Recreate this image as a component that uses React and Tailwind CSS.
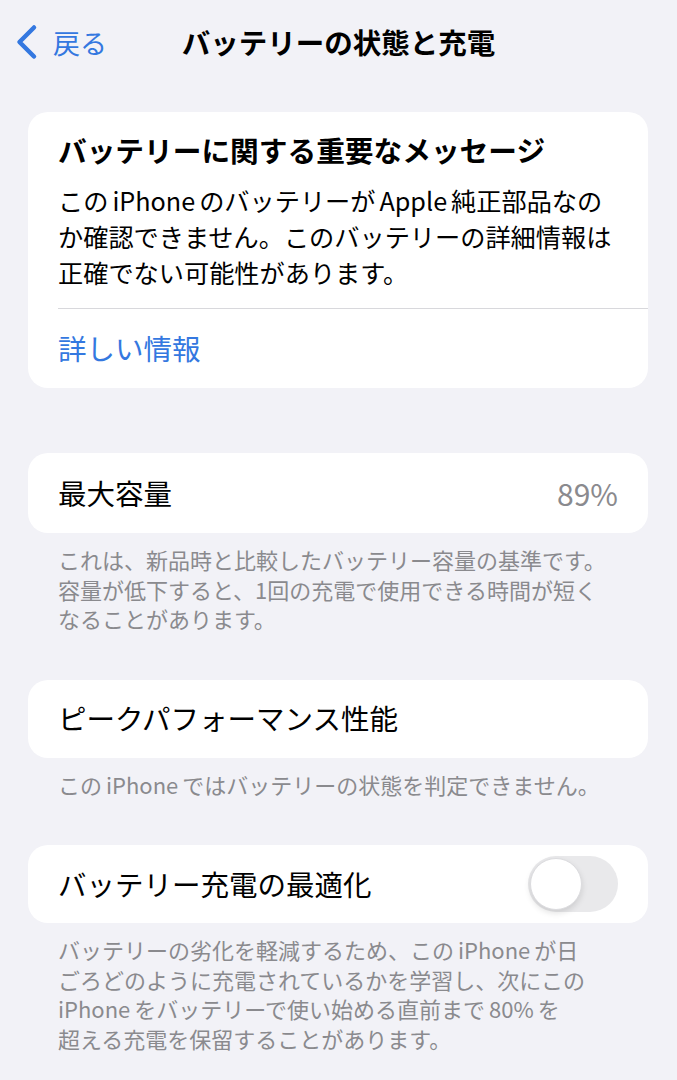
import { useState } from 'react';

const font = { fontFamily: '"Noto Sans CJK JP", "Noto Sans", sans-serif' };

// latin words get a little air around them, like iOS does in Japanese text
const L = ({ children }) => <span className="mx-[4px]">{children}</span>;

function Footnote({ lines }) {
    return (
        <div className="mt-[12px] mb-[46px] pl-[30px] text-[22px] leading-[29.5px] text-[#8a8a8e] whitespace-nowrap">
            {lines.map((l, i) => <div key={i}>{l}</div>)}
        </div>
    );
}

function Toggle({ on, onChange }) {
    return (
        <button
            onClick={() => onChange(!on)}
            className={"relative w-[90px] h-[56px] rounded-full transition-colors " + (on ? "bg-[#34c759]" : "bg-[#e9e9eb]")}
        >
            <span
                className={"absolute top-[2px] w-[52px] h-[52px] rounded-full bg-white border border-[#dcdcdf] shadow-[0_3px_6px_rgba(0,0,0,0.12)] transition-all " + (on ? "left-[36px]" : "left-[2px]")}
            ></span>
        </button>
    );
}

export default function App() {
    const [optimize, setOptimize] = useState(false);

    return (
        <div className="w-full min-h-[1080px] bg-[#f2f2f7] text-black" style={font}>
            {/* nav bar */}
            <div className="h-[84px] grid grid-cols-[1fr_auto_1fr] items-center">
                <div className="flex items-center pl-[14px] text-[#3478e0]">
                    <svg width="26" height="36" viewBox="0 0 26 36" fill="none">
                        <path d="M20 3.5 L5.5 18 L20 32.5" stroke="#3478e0" strokeWidth="4.5" strokeLinecap="round" strokeLinejoin="round" />
                    </svg>
                    <span className="ml-[13px] text-[27px] leading-none">戻る</span>
                </div>
                <div className="text-[28.5px] font-bold leading-none">バッテリーの状態と充電</div>
                <div></div>
            </div>

            <div className="pl-[28px] pr-[29px] pt-[28px]">
                {/* important message */}
                <div className="bg-white rounded-[20px]">
                    <div className="px-[30px] pt-[20px] pb-[18px]">
                        <div className="text-[28.7px] font-bold leading-[36px]">バッテリーに関する重要なメッセージ</div>
                        <div className="mt-[14px] text-[25.2px] leading-[36px] whitespace-nowrap">
                            <div>この<L>iPhone</L>のバッテリーが<L>Apple</L>純正部品なの</div>
                            <div>か確認できません。このバッテリーの詳細情報は</div>
                            <div>正確でない可能性があります。</div>
                        </div>
                    </div>
                    <div className="ml-[30px] border-t border-[#d8d8dc]"></div>
                    <div className="h-[79px] flex items-center px-[30px] text-[28.5px] text-[#3478e0]">詳しい情報</div>
                </div>

                <div className="h-[65px]"></div>

                {/* max capacity */}
                <div className="bg-white rounded-[20px] h-[80px] flex items-center justify-between px-[30px]">
                    <span className="text-[28.5px]">最大容量</span>
                    <span className="text-[30px] text-[#8a8a8e]">89%</span>
                </div>
                <Footnote lines={[
                    "これは、新品時と比較したバッテリー容量の基準です。",
                    "容量が低下すると、1回の充電で使用できる時間が短く",
                    "なることがあります。",
                ]} />

                {/* peak performance */}
                <div className="bg-white rounded-[20px] h-[78px] flex items-center px-[30px]">
                    <span className="text-[28.5px]">ピークパフォーマンス性能</span>
                </div>
                <Footnote lines={[<>この<L>iPhone</L>ではバッテリーの状態を判定できません。</>]} />

                {/* optimized charging */}
                <div className="bg-white rounded-[20px] h-[78px] flex items-center justify-between px-[30px]">
                    <span className="text-[28.5px]">バッテリー充電の最適化</span>
                    <Toggle on={optimize} onChange={setOptimize} />
                </div>
                <Footnote lines={[
                    <>バッテリーの劣化を軽減するため、この<L>iPhone</L>が日</>,
                    "ごろどのように充電されているかを学習し、次にこの",
                    <><span className="mr-[4px]">iPhone</span>をバッテリーで使い始める直前まで<L>80%</L>を</>,
                    "超える充電を保留することがあります。",
                ]} />
            </div>
        </div>
    );
}
